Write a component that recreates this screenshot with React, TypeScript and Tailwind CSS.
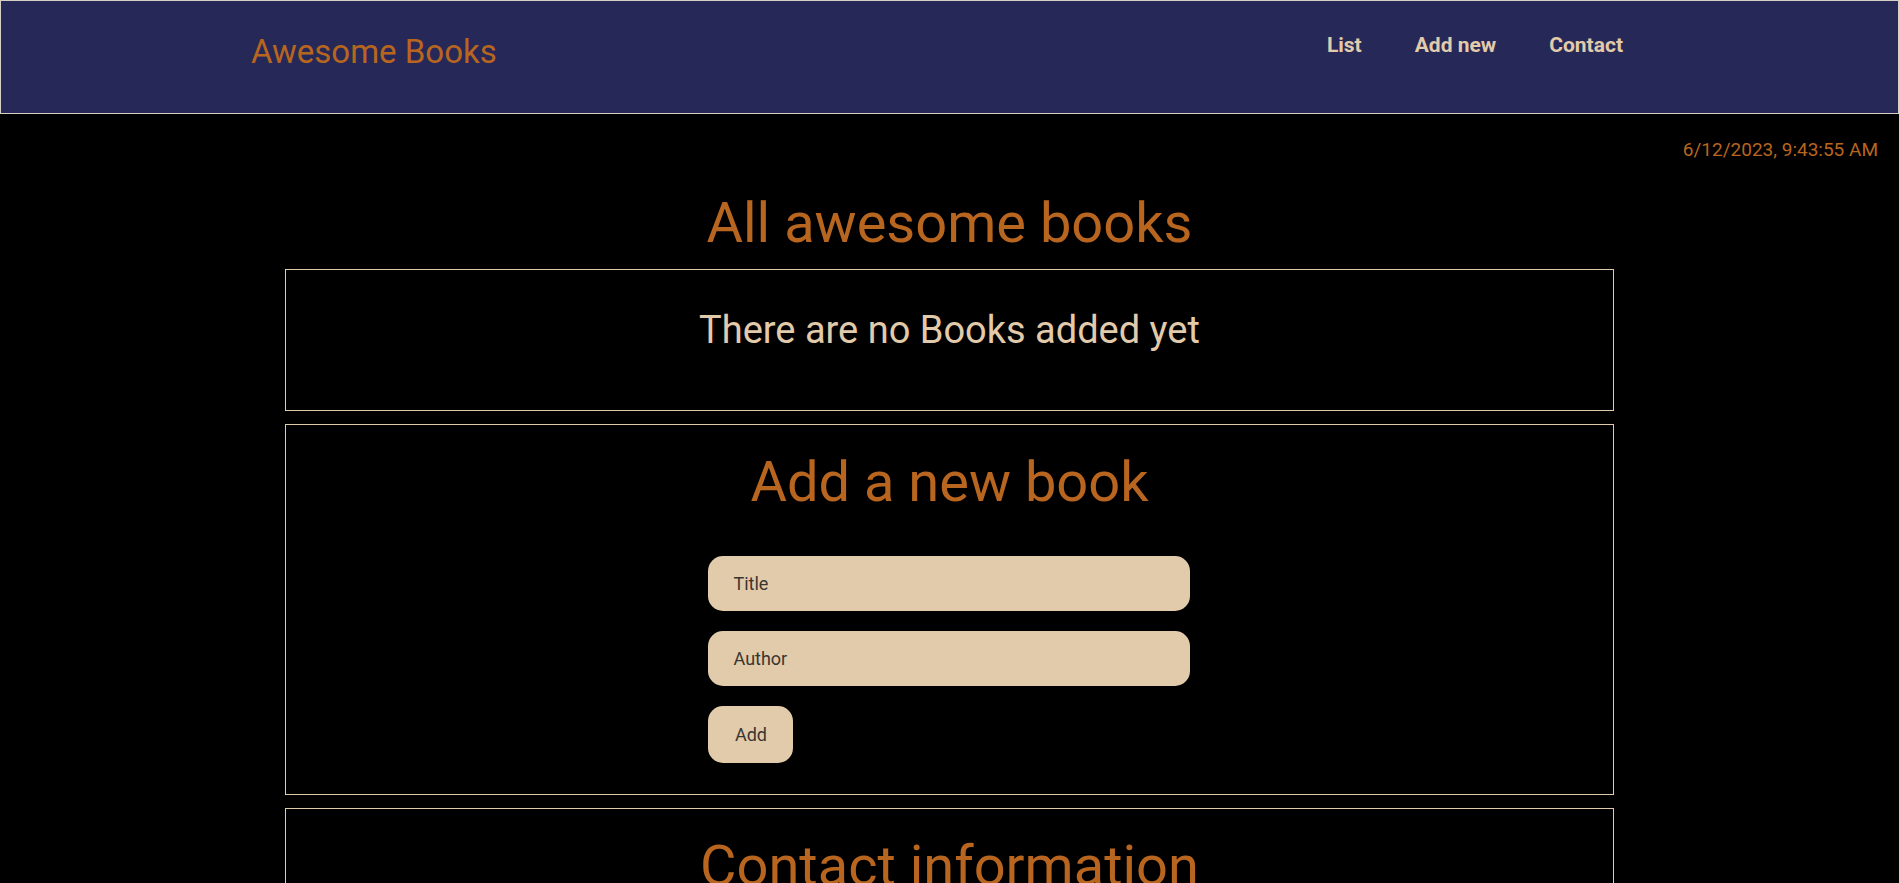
import React, { useState } from 'react'

const font = { fontFamily: 'Roboto, "Noto Sans", sans-serif' }

export default function App() {
    const [title, setTitle] = useState("");
    const [author, setAuthor] = useState("");

    return (
        <div className="min-h-screen bg-black font-['Roboto',sans-serif]" style={font}>
            <header className="flex justify-between items-start h-[114px] bg-[#262957] border border-[#d8cfc4] pl-[250px] pr-[275px] pt-[34px]">
                <div className="text-[33px] leading-none text-[#b8651f]">Awesome Books</div>
                <nav className="flex gap-[53px] text-[21px] leading-none font-bold text-[#e2cbab]">
                    <a href="#list">List</a>
                    <a href="#add">Add new</a>
                    <a href="#contact">Contact</a>
                </nav>
            </header>

            <div className="flex justify-end pr-[21px] mt-[26px] text-[19px] leading-none text-[#b8651f]">
                6/12/2023, 9:43:55 AM
            </div>

            <main className="w-[70%] mx-auto flex flex-col">
                <h1 className="text-center text-[56px] leading-none text-[#b8651f] mt-[36px] mb-[18px]">All awesome books</h1>

                <section id="list" className="border border-[#e2cbab] pt-[41px] pb-[61px]">
                    <p className="text-center text-[38px] leading-none text-[#e2cbab]">There are no Books added yet</p>
                </section>

                <section id="add" className="border border-[#e2cbab] mt-[13px] pt-[29px] pb-[31px] flex flex-col items-center">
                    <h2 className="text-[56px] leading-none text-[#b8651f]">Add a new book</h2>
                    <form className="w-[482px] mt-[46px] flex flex-col gap-5" onSubmit={e => e.preventDefault()}>
                        <input type="text" name="title" value={title} onChange={e => setTitle(e.target.value)} placeholder="Title" className="h-[55px] rounded-[15px] bg-[#e2cbab] px-[25px] text-[18px] text-[#333] placeholder-[#3a3530] outline-none" />
                        <input type="text" name="author" value={author} onChange={e => setAuthor(e.target.value)} placeholder="Author" className="h-[55px] rounded-[15px] bg-[#e2cbab] px-[25px] text-[18px] text-[#333] placeholder-[#3a3530] outline-none" />
                        <div className="flex">
                            <button type="submit" className="h-[57px] w-[85px] rounded-[15px] bg-[#e2cbab] text-[18px] text-[#3a3530]">Add</button>
                        </div>
                    </form>
                </section>

                <section id="contact" className="border border-[#e2cbab] mt-[13px] pt-[29px] pb-[40px] flex flex-col items-center">
                    <h2 className="text-[56px] leading-none text-[#b8651f]">Contact information</h2>
                    <p className="mt-8 text-[24px] text-[#e2cbab]">Do you have any questions or you just want to say "Hello"?</p>
                </section>
            </main>
        </div>
    )
}
